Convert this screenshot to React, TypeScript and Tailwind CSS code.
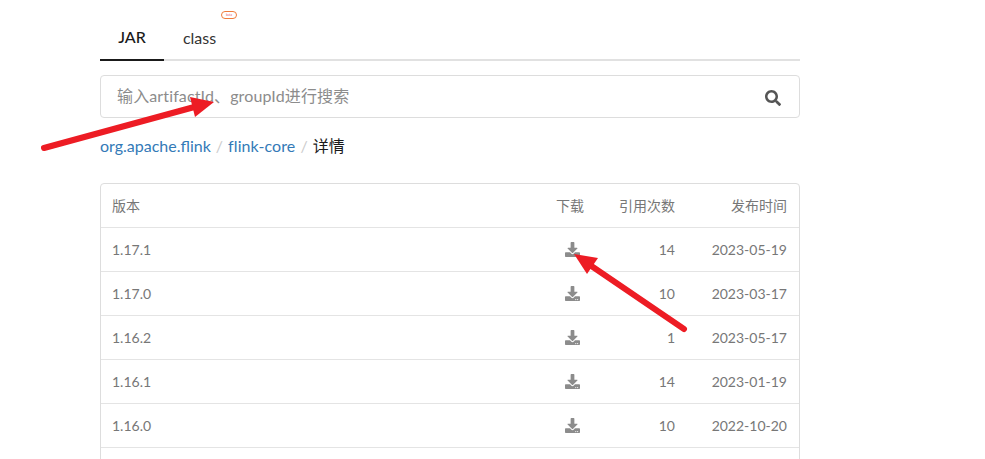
import React from "react";
import { FaDownload, FaSearch } from "react-icons/fa";

const rows = [
  ["1.17.1", "14", "2023-05-19"],
  ["1.17.0", "10", "2023-03-17"],
  ["1.16.2", "1", "2023-05-17"],
  ["1.16.1", "14", "2023-01-19"],
  ["1.16.0", "10", "2022-10-20"],
];

export default function App() {
  return (
    <div
      className="relative h-[459px] w-[985px] overflow-hidden bg-white"
      style={{ fontFamily: 'Lato, "Noto Sans CJK SC", sans-serif' }}
    >
      <div className="ml-[100px] w-[700px]">
        <div className="flex h-[61px] border-b-2 border-[#e1e1e1] pt-[15px]">
          <div className="-mb-[2px] flex h-[46px] w-[64px] items-center justify-center border-b-2 border-[#1a1a1a] text-[16px] font-medium text-[#1a1a1a]">
            JAR
          </div>
          <div className="relative -mb-[2px] flex h-[46px] w-[72px] items-center justify-center pr-[1px] text-[16px] text-[#333333]">
            class
            <span className="absolute left-[57px] -top-[4px] flex h-[8px] w-[16px] items-center justify-center rounded-[4px] border border-[#f07c3c] text-[3px] leading-none text-[#e8505b]">
              beta
            </span>
          </div>
        </div>
        <div className="mt-[14px] flex h-[43px] items-center justify-between rounded-[4px] border border-[#dddddd] pl-[16px] pr-[18px]">
          <span className="-mt-[2px] text-[16px] tracking-[0.13px] text-[#8c8c8c]">输入artifactId、groupId进行搜索</span>
          <FaSearch className="mt-[3px] text-[16px] text-[#555555]" />
        </div>
        <div className="mt-[17px] flex h-[22px] items-center text-[16px] leading-none">
          <span className="text-[#337ab7]">org.apache.flink</span>
          <span className="mx-[5px] text-[#cccccc]">/</span>
          <span className="tracking-[0.1px] text-[#337ab7]">flink-core</span>
          <span className="mx-[5px] text-[#cccccc]">/</span>
          <span className="text-[#1a1a1a]">详情</span>
        </div>
        <div className="mt-[26px] h-[300px] rounded-[4px] border border-[#dddddd] text-[14px] text-[#777777]">
          <div className="flex h-[43px] items-center pl-[11px] pr-[12px]">
            <span className="flex-1">版本</span>
            <span className="w-[28px] text-center">下载</span>
            <span className="w-[91px] text-right">引用次数</span>
            <span className="w-[112px] text-right">发布时间</span>
          </div>
          {rows.map((r) => (
            <div key={r[0]} className="flex h-[44px] items-center border-t border-[#e4e4e4] pl-[11px] pr-[12px]">
              <span className="flex-1">{r[0]}</span>
              <span className="flex w-[28px] justify-center pl-[4px]">
                <FaDownload className="text-[15px] text-[#8c8c8c]" />
              </span>
              <span className="w-[91px] text-right">{r[1]}</span>
              <span className="w-[112px] text-right">{r[2]}</span>
            </div>
          ))}
          <div className="border-t border-[#e4e4e4]" />
        </div>
      </div>
      <svg className="absolute left-0 top-0" width="985" height="459" viewBox="0 0 985 459" fill="none">
        <path d="M44 148 L198 106" stroke="#ed1c24" strokeWidth="6" strokeLinecap="round" />
        <polygon points="214,102 190,97 195,117" fill="#ed1c24" />
        <path d="M684 329 L587 263" stroke="#ed1c24" strokeWidth="6" strokeLinecap="round" />
        <polygon points="574,254 598,258 587,274" fill="#ed1c24" />
      </svg>
    </div>
  );
}
